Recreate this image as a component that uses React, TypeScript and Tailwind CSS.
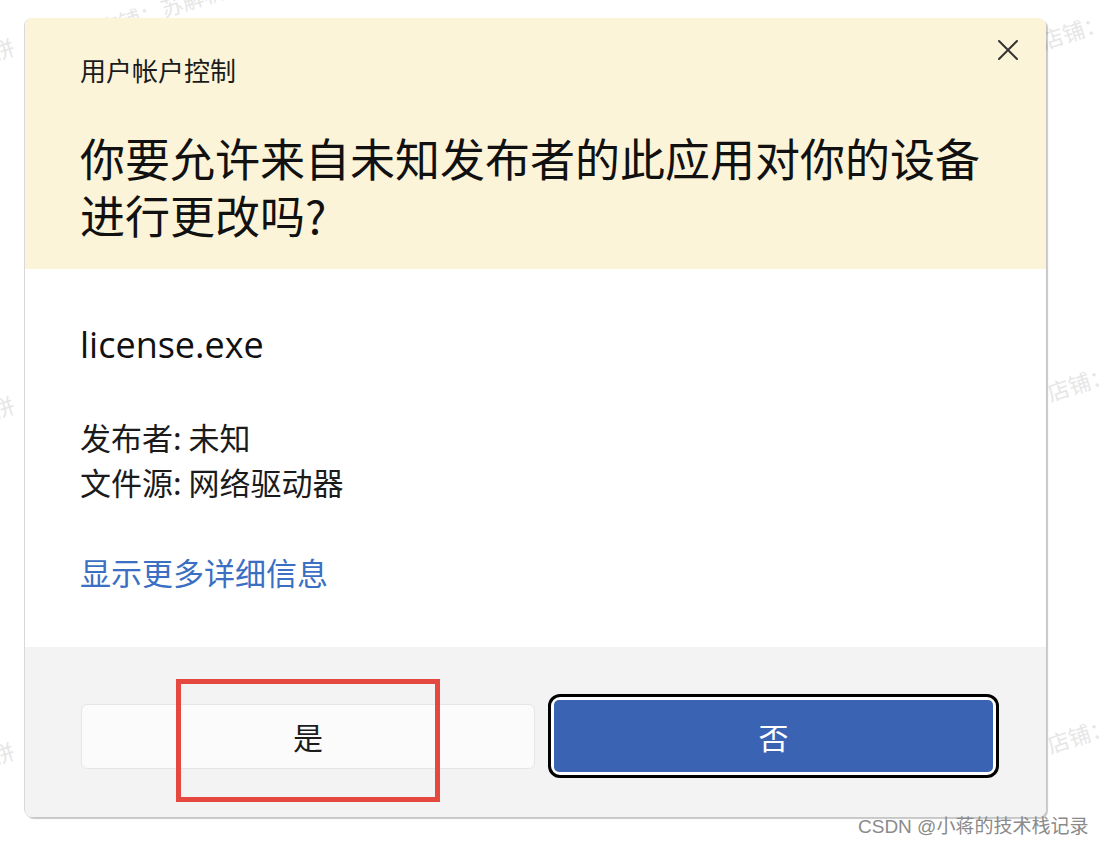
import React from "react";

const cjk = { fontFamily: '"Noto Sans CJK SC", "Noto Sans", sans-serif' };
const latin = { fontFamily: '"Open Sans", "Noto Sans CJK SC", sans-serif' };

function Watermark({ className, text }: { className: string; text: string }) {
  return (
    <div
      className={"absolute select-none whitespace-nowrap text-[22px] text-[#e6e6e6] -rotate-[18deg] " + className}
      style={cjk}
    >
      {text}
    </div>
  );
}

export default function App() {
  return (
    <div className="relative w-[1106px] h-[846px] bg-white overflow-hidden" style={cjk}>
      <Watermark className="left-[95px] top-[-8px]" text="店铺：苏解析" />
      <Watermark className="left-[-8px] top-[32px]" text="拼" />
      <Watermark className="left-[-8px] top-[390px]" text="拼" />
      <Watermark className="left-[-8px] top-[736px]" text="拼" />
      <Watermark className="left-[1040px] top-[14px]" text="店铺：" />
      <Watermark className="left-[1046px] top-[366px]" text="店铺：" />
      <Watermark className="left-[1046px] top-[718px]" text="店铺：" />

      <div className="pt-[18px] pl-[24px]">
        <div className="relative w-[1022px] h-[799px] flex flex-col rounded-[8px] overflow-hidden border-l border-[#d8d8d8] shadow-[2px_2px_1px_rgba(0,0,0,0.22)]">
          {/* header */}
          <div className="h-[251px] bg-[#fcf4d8] pl-[55px] pt-[37px] relative">
            <div className="text-[26px] leading-[30px] text-[#1b1b1b]">用户帐户控制</div>
            <div className="mt-[44px] text-[45px] leading-[57px] text-[#111]">
              你要允许来自未知发布者的此应用对你的设备
              <br />
              进行更改吗?
            </div>
            <button className="absolute right-[26px] top-[20px] w-[24px] h-[24px] flex items-center justify-center">
              <svg width="24" height="24" viewBox="0 0 24 24" fill="none" stroke="#333" strokeWidth="2" strokeLinecap="round">
                <path d="M3 3 L21 21 M21 3 L3 21" />
              </svg>
            </button>
          </div>
          {/* body */}
          <div className="h-[378px] bg-white pl-[55px] pt-[56px]">
            <div className="text-[36px] leading-[40px] text-[#111]" style={latin}>license.exe</div>
            <div className="mt-[49px] text-[31px] leading-[45px] text-[#1b1b1b]">
              <div>发布者: 未知</div>
              <div>文件源: 网络驱动器</div>
            </div>
            <div className="mt-[45px] text-[31px] leading-[45px] text-[#3a6fc4]">显示更多详细信息</div>
          </div>
          {/* footer */}
          <div className="flex-1 bg-[#f3f3f3] flex items-start pl-[56px] pt-[47px] gap-[13px]">
            <div className="mt-[10px] w-[454px] h-[65px] rounded-[6px] bg-[#fbfbfb] border border-[#e6e6e6] flex items-center justify-center text-[30px] text-[#1b1b1b]">
              是
            </div>
            <div className="w-[451px] h-[84px] rounded-[12px] border-[3px] border-black bg-white p-[3px]">
              <div className="w-full h-full rounded-[5px] bg-[#3b63b3] flex items-center justify-center text-[30px] text-white">
                否
              </div>
            </div>
          </div>
        </div>
      </div>

      {/* red annotation */}
      <div className="absolute left-[176px] top-[679px] w-[264px] h-[123px] border-[5px] border-[#e5483f]" />

      <div className="absolute left-[858px] top-[814px] text-[19px] leading-[26px] text-[#8a8a8a]" style={{ fontFamily: '"Liberation Sans", "Noto Sans CJK SC", sans-serif' }}>
        CSDN @小蒋的技术栈记录
      </div>
    </div>
  );
}
